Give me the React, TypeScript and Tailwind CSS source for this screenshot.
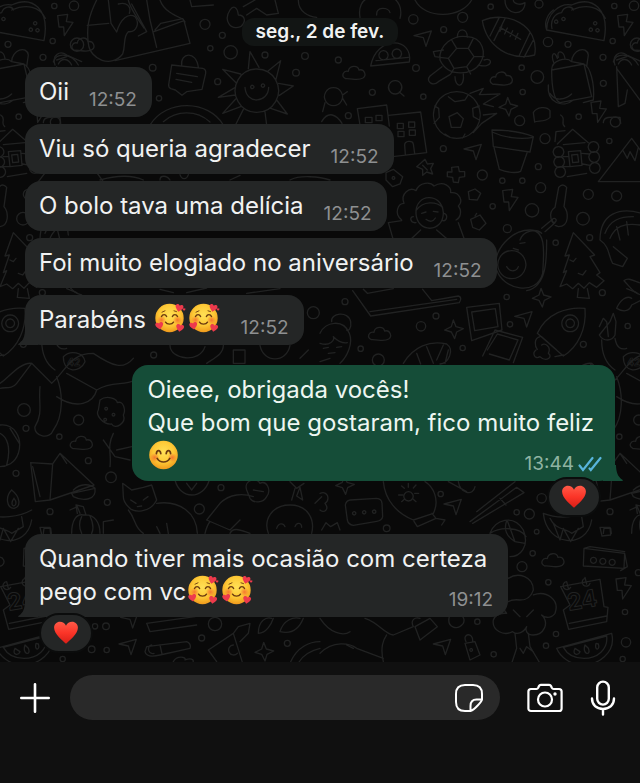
import type { ReactNode } from 'react';

type Dot = [number, number, number];
type Stamp = [number, number];

/* Wallpaper artwork is drawn on a 3x grid and repeated every 1680 units. */
const DOTS: Dot[] = [
  [458, 203, 10], [477, 295, 8], [653, 245, 9], [615, 73, 15], [667, 106, 9], [631, 145, 8], [692, 157, 20],
  [795, 165, 9], [915, 168, 10], [888, 218, 10], [1240, 58, 14], [1388, 52, 15], [1331, 89, 9], [1015, 180, 9],
  [1248, 204, 10], [1117, 277, 9], [1472, 20, 8], [1617, 12, 12], [1843, 18, 8], [1902, 17, 14], [1838, 123, 8],
  [1809, 172, 9], [1810, 250, 9], [1704, 133, 9], [1644, 126, 14], [1565, 203, 8], [1612, 231, 19], [1568, 276, 8],
  [1270, 290, 8], [1045, 347, 9], [1559, 362, 15], [1846, 366, 15], [1736, 350, 8], [1828, 423, 8], [1635, 416, 15],
  [1615, 500, 9], [1447, 525, 15], [1330, 446, 9], [1567, 542, 8], [1507, 542, 8], [1622, 563, 15], [1478, 619, 8],
  [1596, 631, 20], [1522, 686, 12], [1749, 656, 19], [1765, 583, 15], [1850, 588, 15], [231, 134, 20],
  [1667, 728, 8], [1769, 713, 9], [1807, 878, 9], [1520, 891, 8], [1035, 905, 9], [1308, 948, 9], [1263, 979, 14],
  [1530, 973, 8], [1388, 1044, 8], [1082, 1046, 8], [1750, 1033, 9], [1883, 978, 8], [1135, 1080, 18],
  [72, 1230, 19], [236, 1260, 15], [78, 1285, 9], [178, 1310, 8], [461, 1065, 9], [940, 938, 18],
  [265, 1382, 9], [333, 1432, 16], [48, 1420, 9], [322, 1507, 9], [150, 1535, 9], [663, 1463, 9], [598, 1527, 15],
  [318, 1879, 10], [285, 1879, 8], [645, 1872, 20], [605, 1914, 9], [862, 1930, 9], [275, 1948, 10], [320, 1950, 8],
  [188, 1977, 8], [1160, 1585, 10], [1322, 1482, 8], [1588, 1542, 15], [1550, 1537, 8], [1610, 1595, 7],
  [1598, 1660, 8], [1566, 1700, 15], [1645, 1747, 8], [1878, 1927, 14], [1875, 1836, 8],
  [1668, 1902, 8], [1638, 1937, 8], [1481, 1963, 8], [1432, 1865, 8], [1915, 1718, 9], [1625, 1495, 14],
];

const BOLTS: Stamp[] = [[1875, 75], [1795, 335], [1530, 600], [1870, 1765]];
const SPARKS: Stamp[] = [[1525, 320], [1625, 893], [1362, 988], [793, 1955], [1035, 1455]];
const CLOUDS: Stamp[] = [[1063, 220], [1505, 237], [1140, 1003], [245, 1330], [1660, 1682], [1930, 135]];
const PLANES: Stamp[] = [[1270, 115], [1420, 455], [1572, 957], [1360, 1520], [385, 1940], [1328, 1940], [390, 1860]];

const LINES: string[] = [
  // mitten and toy tower
  'M290 0C262 55 260 90 265 130C270 180 335 205 368 162C378 134 368 110 385 95C410 98 420 68 405 50C385 38 362 56 350 96L333 70L325 0M262 76L326 70M355 12C380 5 395 20 388 40',
  'M385 0C390 24 412 55 432 84M440 0L450 60L470 142M462 95L552 62L570 130L345 182M465 90L482 70L548 56L555 66M395 12L440 95L415 108M480 0C490 30 520 45 550 58',
  // notepad bag
  'M515 195L608 205Q619 208 617 220L606 268L560 275L546 286L526 270L512 266Q505 262 506 254ZM530 220L592 230M528 238L575 247M545 196C540 158 588 150 595 202',
  // sun
  'M770 207A65 65 0 1 0 771 207ZM735 262C738 315 805 310 806 262M752 262A5 5 0 1 1 753 264M784 258A5 5 0 1 1 785 260M745 206L750 155L777 202M805 212L842 182L828 238M836 250L880 258L838 286M830 300L862 342L812 325M795 336L800 375M730 328L708 372M722 320L668 340L707 297M706 285L655 292L706 262M708 248L668 208L722 222',
  'M450 375C500 295 625 300 670 375M490 365C530 330 590 330 630 366',
  // robot, star and face along the top edge
  'M690 30C670 60 690 92 722 80C740 66 735 45 715 45C712 20 700 15 690 30M730 20L765 0M740 45L770 25L800 45L835 40L825 0M895 0C895 35 925 50 950 52M570 0L575 20L640 15',
  'M1080 52C1075 25 1085 -5 1110 -5M1200 55C1208 25 1195 0 1175 -8M1245 0C1275 60 1385 55 1415 0M1130 45C1128 20 1165 20 1170 38M1515 0C1515 48 1575 50 1575 8C1560 18 1540 10 1540 0',
  // rice ball
  'M1112 198L1228 186C1240 110 1130 105 1112 198ZM1150 152A14 14 0 1 0 1151 152M1190 147A14 14 0 1 0 1191 147M1128 182L1225 172',
  // turtle
  'M1320 180C1315 135 1360 105 1400 110C1450 112 1460 160 1440 190C1420 225 1345 235 1320 180ZM1345 175L1370 145L1405 145L1422 170L1400 200L1362 205ZM1345 175L1320 172M1370 145L1355 120M1405 145L1420 115M1422 170L1452 170M1400 200L1412 222M1362 205L1352 222M1372 112C1372 82 1402 82 1402 112M1452 180C1480 170 1480 205 1438 196M1326 200L1290 228C1275 245 1300 260 1315 245L1350 224M1365 230C1365 265 1395 265 1390 222M1330 150L1300 155L1305 170L1322 172',
  // football
  'M1447 62C1520 30 1620 75 1604 165C1530 185 1460 140 1447 62ZM1470 108L1498 52M1482 122L1516 54M1557 168L1590 98M1572 172L1600 120M1500 82L1562 118M1506 76L1500 94M1522 84L1514 102M1538 92L1530 110M1554 100L1546 118',
  // taco
  'M1640 90C1640 40 1680 8 1715 15C1780 -15 1830 30 1812 122ZM1640 90C1632 70 1640 45 1660 30M1656 86C1650 60 1665 40 1685 38C1690 20 1715 15 1720 30M1668 60A5 5 0 1 0 1669 60M1690 52A5 5 0 1 0 1691 52M1785 65A5 5 0 1 0 1786 65M1772 84A5 5 0 1 0 1773 84M1792 86A5 5 0 1 0 1793 86M1715 30C1760 10 1800 20 1816 55',
  // magnifier, fish
  'M1185 242A20 20 0 1 0 1186 242M1198 276L1212 288M1000 263A27 27 0 1 0 1001 263M1028 285L1042 275M1028 295L1040 315M975 308L968 335',
  // backpack
  'M1655 210L1752 192L1775 290L1680 308C1660 300 1655 250 1655 210ZM1655 210C1655 180 1700 170 1715 185L1752 192C1770 200 1785 250 1780 300L1750 308M1662 190C1650 160 1665 150 1672 175M1675 172C1668 150 1690 150 1695 175M1715 185C1715 150 1760 135 1765 165L1760 200M1645 255C1640 310 1690 325 1720 300M1650 280C1665 305 1695 300 1715 282',
  // baseball bat
  'M1845 195C1835 165 1860 150 1880 165L1925 185M1850 200L1855 320M1850 205L1920 300M1855 320L1875 310L1882 270M1850 180L1880 170',
  // buildings
  'M1080 375L1072 326L1160 315L1168 378M1096 352H1116V368H1096ZM1128 346H1146V362H1128ZM1165 346L1262 336L1280 458L1178 470M1192 370H1210V386H1192ZM1226 366H1244V382H1226ZM1194 394H1212V410H1194ZM1228 390H1246V406H1228ZM1216 464L1214 435C1214 422 1238 420 1240 432L1244 460M965 365C985 330 1010 345 1026 370',
  // soccer ball with flames
  'M1370 275A70 70 0 1 0 1371 275M1347 350L1372 338L1390 356L1382 382L1354 382ZM1345 290L1365 305L1395 300L1405 284M1302 370L1318 352L1316 325L1304 318M1438 318L1418 325L1420 350L1438 360M1335 402L1350 412M1395 402L1388 414M1410 280L1450 265L1438 284L1500 282L1450 312L1480 320M1450 345L1490 340L1445 370L1420 398',
  // pot
  'M1476 390C1515 390 1565 395 1600 410L1590 456L1480 440ZM1476 396C1510 412 1560 420 1600 412M1482 442L1498 508C1520 518 1550 520 1562 514L1582 456',
  // blob and squiggle
  'M1600 338C1610 320 1640 318 1650 332L1650 352C1635 368 1612 360 1604 366ZM1682 345C1700 355 1680 370 1694 380',
  // log cabin
  'M1665 425L1668 395L1695 392M1672 432L1718 388L1765 428M1690 434L1755 428M1690 470L1705 470M1690 500L1712 500M1702 530L1760 520M1705 455L1742 452L1746 496L1710 500ZM1715 465L1733 463L1736 486L1718 488ZM1675 440A16 16 0 1 0 1676 440M1677 470A16 16 0 1 0 1678 470M1680 500A16 16 0 1 0 1681 500M1780 425A16 16 0 1 0 1781 425M1782 455A16 16 0 1 0 1783 455M1784 488A16 16 0 1 0 1785 488M1746 460L1768 462M1748 492L1770 496',
  // mountain
  'M1795 545L1895 415L1990 545ZM1868 450L1882 475L1890 455L1905 482L1915 442',
  // small flowers
  'M1262 490L1275 478L1282 492L1300 490L1292 506L1298 522L1280 516L1268 526L1268 508L1250 500ZM1268 496L1282 510M1355 502L1375 500L1378 515L1394 515L1394 530L1378 532L1375 548L1360 546L1358 532L1342 530L1342 516L1356 516Z',
  'M1158 518L1180 508L1208 530L1200 552L1178 560L1158 540ZM1180 530A4 4 0 1 0 1181 530M1405 575L1425 567L1442 580L1432 600L1408 598ZM1412 658L1440 645L1458 670L1438 690L1418 682ZM1425 648L1430 640',
  // curly-haired portrait
  'M1205 660C1180 640 1195 610 1212 610C1200 580 1230 560 1248 572C1258 545 1292 545 1302 558C1330 540 1355 560 1352 578C1380 575 1390 605 1375 618C1388 635 1380 655 1368 660M1248 640C1245 580 1325 575 1330 638C1330 700 1250 700 1248 640M1248 632C1270 600 1310 605 1328 622M1265 640L1278 636M1300 634L1314 636M1278 658C1290 668 1300 664 1306 654M1240 650C1228 650 1230 670 1248 668M1332 640C1346 645 1340 664 1328 662M1165 668L1180 720M1165 668L1205 662M1375 668L1392 715M1230 720L1262 690M1310 690L1345 720',
  // violin and avocado
  'M1665 622L1676 562Q1688 548 1700 562L1692 620M1665 622C1640 640 1655 675 1675 680C1710 680 1705 635 1692 620M1655 660L1625 685M1665 668L1635 695M1662 655A6 6 0 1 0 1663 655M1560 720C1570 690 1610 685 1625 700',
  'M1490 810C1475 750 1535 690 1590 690C1640 690 1632 760 1628 820C1610 890 1510 870 1490 810ZM1535 752A42 42 0 1 0 1536 752M1640 720C1640 780 1640 860 1580 872M1540 745L1555 750M1560 730L1575 728M1520 800C1530 818 1550 815 1555 800',
  // shell
  'M1800 720C1800 640 1860 620 1925 640M1815 700C1830 660 1860 650 1900 650M1830 715C1845 680 1870 668 1920 675M1800 720C1830 740 1825 770 1838 790L1868 800L1882 775L1840 740M1850 680L1860 720M1880 665L1885 705',
  // bird
  'M1872 842C1885 830 1905 845 1925 850M1872 842C1890 860 1900 880 1925 885M1850 925C1860 900 1880 885 1895 895M1850 925C1875 940 1890 930 1895 915L1925 900',
  // fir tree
  'M1720 698L1695 768L1708 765L1690 818L1700 812L1680 860L1700 852L1718 866L1735 850L1752 865L1768 848L1790 862L1812 842L1790 825L1800 818L1770 770L1784 765ZM1735 866L1732 892L1768 895L1762 866M1710 780L1720 785L1728 775M1735 820L1748 825L1758 812',
  // laptop
  'M1058 872L1112 948L1378 908Q1388 892 1375 888L1295 902L1268 868M1090 868L1102 880L1180 866M1110 935L1370 898',
  // framed pictures
  'M1400 922L1498 910L1506 990L1415 1022ZM1415 936L1486 926L1494 980L1424 992ZM1448 1068L1485 990L1568 1012L1540 1088M1462 1050L1492 1002L1554 1020L1528 1080L1468 1062',
  // bun portrait
  'M960 1000C975 965 1030 955 1048 1000C1060 1030 1042 1070 1020 1090M995 965C990 940 1045 930 1052 965C1055 985 1045 995 1040 990M960 1030C990 1040 1005 1020 1000 1010C1015 1025 1030 1030 1042 1028M970 1045L985 1042M1010 1042L1025 1040M985 1060L1005 1058M960 1085L990 1075',
  // croissant
  'M1210 1090C1240 1040 1290 1020 1340 1032C1365 1050 1345 1090 1320 1092M1280 1040L1300 1090M1250 1060L1262 1092M1330 1035L1310 1080M1345 1050L1335 1090',
  // rocket
  'M1612 1000C1640 940 1700 920 1755 925C1760 985 1735 1040 1690 1068ZM1710 945A25 25 0 1 0 1711 945M1710 957A13 13 0 1 0 1711 957M1625 1010L1670 1050M1620 1010C1600 1015 1605 1040 1612 1048M1690 1065L1665 1070M1608 1050C1595 1060 1605 1080 1620 1070C1640 1088 1660 1070 1645 1060C1655 1040 1635 1028 1625 1035',
  // stretching cat in a jersey
  'M118 980L130 955L140 965L145 1010M150 965L160 940L168 965L165 1005C155 1025 130 1025 118 1005ZM125 1020C125 1060 135 1090 165 1110M165 1015C170 1045 185 1050 200 1045',
  'M0 1165C15 1160 35 1170 50 1150L95 1090L155 1150M95 1090C60 1085 20 1140 0 1150M155 1150C200 1110 210 1060 280 1060C340 1100 370 1110 400 1075M120 1160C115 1210 130 1240 105 1280C100 1310 150 1320 160 1290C190 1250 190 1180 170 1130M170 1190C230 1230 280 1210 290 1170L200 1120M290 1170C340 1140 370 1160 405 1140M190 1070C210 1050 250 1055 255 1085C240 1120 190 1120 190 1070',
  // cookie
  'M300 1200C320 1185 350 1195 352 1208C370 1200 378 1230 370 1245C380 1270 345 1290 335 1272C310 1275 285 1245 295 1230ZM318 1222A4 4 0 1 0 319 1222M340 1240A4 4 0 1 0 341 1240M315 1255A4 4 0 1 0 316 1255',
  'M0 1275C40 1270 70 1310 55 1360C45 1390 20 1400 0 1400M0 1300C20 1310 35 1340 20 1395M30 1285L58 1330M340 1300C320 1340 335 1360 330 1400M310 1320L345 1370L390 1380M350 1350L395 1340M400 1375L440 1390',
  // pizza slice and party cone
  'M92 1388L158 1392L150 1500L106 1505ZM158 1392L180 1360L282 1455L150 1500M180 1360L200 1390M215 1480L285 1465C290 1500 250 1505 220 1490ZM220 1470C240 1450 270 1450 285 1465M98 1400L120 1490',
  // candle flame, pumpkin
  'M35 1470C15 1490 20 1525 42 1525C65 1520 60 1490 35 1470M42 1495C32 1508 36 1518 42 1518C50 1514 50 1505 42 1495M215 1600C215 1560 230 1540 250 1545C285 1540 300 1570 300 1600M210 1530L232 1520L240 1540M232 1540L228 1515L250 1520L258 1545M245 1550C235 1570 240 1590 245 1600M270 1548C280 1570 280 1590 275 1600M310 1600L310 1565L340 1560M130 1600L132 1585L152 1585L154 1600',
  // cat
  'M370 1490L368 1450L395 1470L430 1462L455 1455L470 1500C450 1540 400 1540 385 1520C375 1510 370 1500 370 1490ZM392 1500L408 1510M430 1500L444 1490M412 1520L425 1518M385 1530C410 1560 400 1580 430 1600M470 1510C540 1500 590 1540 592 1600M470 1580L480 1600M500 1570L505 1600M525 1440C540 1500 610 1500 628 1440M560 1450L575 1470L590 1450',
  // reader
  'M620 1560L660 1510C690 1480 730 1480 760 1490M620 1560L690 1590L720 1560M740 1470C730 1440 770 1430 780 1450C800 1440 815 1470 800 1490C790 1510 760 1510 750 1495ZM760 1470L790 1475M615 1600C620 1580 625 1570 630 1565M690 1600C700 1580 720 1590 750 1600',
  'M805 1600C790 1560 815 1515 870 1515C925 1515 945 1560 935 1600M830 1585C835 1568 850 1568 855 1580M885 1580C890 1565 905 1568 905 1582M870 1445L890 1465L912 1450M885 1465L875 1500M900 1462L908 1500L890 1488ZM945 1510L965 1490',
  // chat box
  'M1050 1500L1130 1495Q1145 1496 1146 1510L1148 1550Q1146 1562 1130 1564L1060 1576Q1045 1574 1042 1560L1036 1515Q1038 1502 1050 1500ZM1062 1535A5 5 0 1 0 1063 1535M1092 1532A5 5 0 1 0 1093 1532M1122 1530A5 5 0 1 0 1123 1530M960 1480C985 1470 990 1500 975 1510C990 1530 970 1540 960 1530M965 1590L978 1568L992 1580L1012 1568L1020 1590',
  // hot-air balloon
  'M1150 1445C1155 1500 1190 1540 1240 1560L1300 1540C1320 1500 1300 1460 1275 1445M1225 1475A14 14 0 1 0 1226 1475M1225 1450V1462M1196 1485H1208M1244 1480H1256M1205 1505L1213 1498M1248 1505L1240 1498M1205 1458L1213 1465M1248 1455L1240 1464M1242 1564L1252 1580L1308 1555L1296 1540M1308 1555L1335 1560L1325 1575',
  // chopsticks
  'M1410 1565L1550 1462L1572 1478L1418 1570M1430 1535L1545 1445M1500 1495L1518 1515M1375 1445C1380 1480 1420 1490 1425 1460M1345 1445L1400 1475',
  // ramen bowl
  'M1630 1540C1640 1640 1760 1650 1775 1560M1630 1540C1680 1560 1740 1550 1775 1530M1650 1555C1665 1590 1700 1585 1715 1600L1750 1580L1745 1550M1660 1570L1680 1620L1690 1585L1712 1625L1735 1585M1800 1582L1830 1582L1832 1605L1806 1608Z',
  // beach ball
  'M1470 1600C1485 1560 1540 1540 1570 1590C1590 1640 1560 1670 1530 1670M1470 1600C1500 1580 1560 1580 1578 1610M1520 1562C1510 1590 1520 1610 1545 1625L1575 1630M1522 1562L1545 1625',
  // remote
  'M1752 1645L1874 1660L1872 1705L1750 1698ZM1752 1645L1770 1640L1874 1655M1874 1660L1882 1700L1862 1712M1780 1672A9 9 0 1 0 1781 1672M1808 1675A9 9 0 1 0 1809 1675M1836 1678A9 9 0 1 0 1837 1678',
  // calendar
  'M1682 1760L1800 1738L1812 1820L1824 1822L1820 1865L1706 1888L1690 1830L1710 1815ZM1708 1870L1820 1848M1700 1745A12 12 0 1 0 1712 1762M1755 1735A12 12 0 1 0 1770 1750M1700 1745L1705 1765M1755 1732L1760 1752',
  // broccoli
  'M1525 1735C1555 1715 1600 1730 1600 1770C1590 1800 1570 1800 1560 1800M1600 1785C1640 1770 1680 1800 1665 1840C1650 1860 1630 1850 1625 1845C1650 1870 1630 1905 1600 1905C1580 1905 1575 1890 1580 1880C1570 1900 1550 1905 1538 1895C1510 1910 1475 1890 1480 1860C1490 1835 1515 1840 1520 1840C1500 1820 1520 1795 1560 1800M1545 1900L1550 1945L1535 1990M1585 1900L1590 1940L1620 1990M1560 1945L1570 1960L1580 1940L1600 1955M1540 1830L1560 1850M1600 1830L1580 1850',
  // watermelon
  'M1670 1945L1835 1900C1850 1960 1790 1995 1750 1995C1710 1995 1680 1970 1670 1945ZM1690 1942L1820 1908C1825 1950 1790 1975 1752 1975C1720 1975 1700 1960 1690 1942M1725 1945C1715 1965 1735 1968 1740 1955ZM1755 1935C1745 1965 1775 1968 1765 1945ZM1788 1930C1782 1955 1802 1950 1795 1932Z',
  // tag, runner
  'M1395 1930L1425 1925L1440 1965L1410 1980ZM1398 1925C1385 1900 1420 1895 1418 1924M1413 1946A4 4 0 1 0 1414 1946M960 1855C990 1900 1030 1910 1050 1895M1095 1855C1140 1870 1150 1900 1180 1905L1240 1880C1230 1860 1245 1850 1260 1855M1245 1880L1290 1855L1312 1880L1260 1920ZM1150 1985C1140 1940 1150 1920 1160 1905M960 1960C1000 1920 1050 1930 1070 1945L1150 1975M1040 1935L1060 1945M1348 1850C1340 1880 1370 1895 1390 1870C1395 1860 1390 1850 1385 1848',
  // crayons
  'M440 1940L560 1925Q575 1932 570 1945L480 1965Q440 1975 435 1955ZM455 1935A10 10 0 1 0 462 1960M480 1935L486 1962M440 1870L585 1850M440 1870L450 1895L590 1875M520 1985C530 1965 560 1970 555 1980C580 1970 585 1985 575 1990',
  'M625 1950L700 1900L728 1990M625 1950L650 1985M700 1900L715 1880L750 1870L745 1900L720 1925M700 1935A15 15 0 1 0 712 1960M775 1900C775 1860 800 1850 815 1855M775 1900C800 1900 815 1870 820 1855M840 1895C850 1860 880 1850 900 1855M840 1895C880 1905 900 1880 910 1855M870 1990C890 1940 930 1925 960 1925M895 1990C910 1960 940 1950 960 1945',
  // tops and bottoms of smaller objects
  'M300 540C350 525 400 525 430 540M480 540C480 525 500 525 510 540M540 524C545 540 560 540 565 524M690 540L720 526M870 540C900 524 960 530 990 540M130 368C130 350 150 350 180 352L182 370M480 868L520 878M560 878L620 864M740 880L840 866M200 866L230 878M160 186C170 155 215 160 235 195M175 192C185 172 205 175 215 195',
  'M510 1036C510 1080 600 1090 615 1040M620 1090C650 1070 670 1060 670 1036M700 1050H735V1090H700ZM780 1036C790 1090 860 1090 870 1036M900 1075L925 1050',
];

function Wallpaper() {
  return (
    <svg aria-hidden="true" className="pointer-events-none absolute inset-0 h-full w-full text-[#212222]">
      <defs>
        <g id="doodles" fill="none" stroke="currentColor" strokeWidth="4" strokeLinecap="round" strokeLinejoin="round">
          {DOTS.map(([x, y, r]) => (
            <circle key={`${x}-${y}`} cx={x} cy={y} r={r} />
          ))}
          {LINES.map((d) => (
            <path key={d} d={d} />
          ))}
          {BOLTS.map(([x, y]) => (
            <path key={`${x}-${y}`} transform={`translate(${x} ${y})`} d="M-22-28L8-32L4-10L24-8L-2 32L-4 6L-18 6Z" />
          ))}
          {SPARKS.map(([x, y]) => (
            <path key={`${x}-${y}`} transform={`translate(${x} ${y})`} d="M-2-28L6-8L28-2L8 8L2 28L-8 8L-28 2L-8-8Z" />
          ))}
          {CLOUDS.map(([x, y]) => (
            <path key={`${x}-${y}`} transform={`translate(${x} ${y})`} d="M-26 16C-42 8-32-10-18-6C-16-24 10-26 14-10C30-14 38 6 26 14C10 24-8 14-26 16Z" />
          ))}
          {PLANES.map(([x, y]) => (
            <path key={`${x}-${y}`} transform={`translate(${x} ${y})`} d="M-28-8L24-22L8 24L0-2Z" />
          ))}
          <text x="1706" y="1832" transform="rotate(-10 1706 1832)" fontSize="70" fontWeight="700" strokeWidth="3" className="font-['Inter',sans-serif]">
            24
          </text>
          <text x="202" y="1098" fontSize="30" fontWeight="700" strokeWidth="2" className="font-['Inter',sans-serif]">
            42
          </text>
        </g>
      </defs>
      <g transform="scale(0.33333)">
        <use href="#doodles" x="-1680" />
        <use href="#doodles" />
        <use href="#doodles" x="1680" />
        <use href="#doodles" x="3360" />
      </g>
    </svg>
  );
}

const HEART = 'M12 22C9 19 1 13 1 7.2C1 3.8 3.5 1.6 6.4 1.6C8.8 1.6 11 3 12 5.2C13 3 15.2 1.6 17.6 1.6C20.5 1.6 23 3.8 23 7.2C23 13 15 19 12 22Z';

function EmojiDefs() {
  return (
    <svg aria-hidden="true" className="absolute h-0 w-0">
      <defs>
        <radialGradient id="face" cx="0.5" cy="0.4" r="0.6">
          <stop offset="0" stopColor="#ffe056" />
          <stop offset="0.6" stopColor="#fdc936" />
          <stop offset="1" stopColor="#f09a1c" />
        </radialGradient>
        <radialGradient id="blush">
          <stop offset="0" stopColor="#f4622c" stopOpacity="0.8" />
          <stop offset="1" stopColor="#f4622c" stopOpacity="0" />
        </radialGradient>
        <linearGradient id="heart" x1="0" y1="0" x2="0" y2="1">
          <stop offset="0" stopColor="#ff5a48" />
          <stop offset="0.5" stopColor="#fb3528" />
          <stop offset="1" stopColor="#d81f18" />
        </linearGradient>
      </defs>
    </svg>
  );
}

function LoveFace() {
  return (
    <svg role="img" aria-label="🥰" viewBox="0 0 32 32" className="mx-px inline-block h-8 w-8 align-[-7px]">
      <circle cx="15.5" cy="15" r="14.2" fill="url(#face)" />
      <circle cx="7.5" cy="17" r="4.5" fill="url(#blush)" />
      <circle cx="23.5" cy="17" r="4.5" fill="url(#blush)" />
      <g fill="none" stroke="#6b3a10" strokeWidth="1.4" strokeLinecap="round">
        <path d="M7.5 13.6C8.6 11 11.6 11 12.6 13.6M18.4 13.6C19.4 11 22.4 11 23.5 13.6" />
        <path d="M11.5 19.2C13 21.8 18 21.8 19.5 19.2" />
        <path d="M8 9.2L11 7.8M20 7.8L22.5 8.6" strokeWidth="0.9" />
      </g>
      <g fill="#ee3a4c">
        <path d={HEART} transform="translate(22 0) rotate(14) scale(0.36)" />
        <path d={HEART} transform="translate(0.5 19.5) rotate(-10) scale(0.36)" />
        <path d={HEART} transform="translate(22.5 20) rotate(12) scale(0.36)" />
        <path d={HEART} transform="translate(28.5 5) scale(0.13)" />
      </g>
    </svg>
  );
}

function SmileFace() {
  return (
    <svg role="img" aria-label="😊" viewBox="0 0 32 32" className="mx-px h-8 w-8">
      <circle cx="15.5" cy="15" r="14.3" fill="url(#face)" />
      <circle cx="6.8" cy="17.5" r="4.6" fill="url(#blush)" />
      <circle cx="24.2" cy="17.5" r="4.6" fill="url(#blush)" />
      <g fill="none" stroke="#6b3a10" strokeWidth="1.7" strokeLinecap="round">
        <path d="M8.4 13.6C8.8 9.6 12.2 9.6 12.8 13.6M18.2 13.6C18.8 9.6 22.2 9.6 22.6 13.6" />
        <path d="M9.2 18.4C12 23.2 19 23.2 21.8 18.4" />
      </g>
    </svg>
  );
}

function Reaction({ side }: { side: string }) {
  return (
    <button
      type="button"
      aria-label="Reação: coração"
      className={`absolute -bottom-9 flex h-10 w-[54px] items-center justify-center rounded-full border-2 border-[#0b0c0c] bg-[#242626] ${side}`}
    >
      <svg viewBox="0 0 24 24" className="h-[26px] w-[26px]">
        <path d={HEART} fill="url(#heart)" />
      </svg>
    </button>
  );
}

function Tail({ className }: { className: string }) {
  return (
    <svg aria-hidden="true" viewBox="0 0 20 16" className={`absolute bottom-0 h-4 w-5 ${className}`}>
      <path d="M20 16H1C-0.5 16 0 15 1 14.4C5 12 7 7 7 0H20Z" fill="currentColor" />
    </svg>
  );
}

type ReceivedProps = { time: string; tail?: boolean; reaction?: boolean; lead?: string; children: ReactNode };

function Received({ time, tail, reaction, lead, children }: ReceivedProps) {
  return (
    <li className="relative w-fit rounded-2xl bg-[#242626] pt-2 pr-[15px] pb-[9px] pl-[14px] text-[#f1f2f2]">
      {tail && <Tail className="-left-[7px] text-[#242626]" />}
      {lead && <p className="pr-[6px]">{lead}</p>}
      <div className="flex items-end justify-between gap-5">
        <p>{children}</p>
        <time className="text-[19px] leading-4 text-[#8e9091]">{time}</time>
      </div>
      {reaction && <Reaction side="left-[14px]" />}
    </li>
  );
}

const iconButton = 'flex shrink-0 items-center justify-center text-white';

export default function App() {
  return (
    <div className="flex min-h-screen flex-col bg-[#101010] font-['Inter','Liberation_Sans',sans-serif]">
      <EmojiDefs />
      <main className="relative grow overflow-hidden bg-[#090909] px-[25px] pt-[18px] pb-[45px]">
        <Wallpaper />
        <h1 className="relative mx-auto w-fit rounded-xl bg-[#121514] px-[14px] text-[19px] leading-7 font-semibold text-[#f1f2f2]">
          seg., 2 de fev.
        </h1>
        <ol className="relative mt-[21px] flex flex-col gap-[7px] text-2xl leading-[33px]">
          <Received time="12:52">Oii</Received>
          <Received time="12:52">Viu só queria agradecer</Received>
          <Received time="12:52">O bolo tava uma delícia</Received>
          <Received time="12:52">Foi muito elogiado no aniversário</Received>
          <Received time="12:52" tail>
            Parabéns <LoveFace />
            <LoveFace />
          </Received>
          <li className="relative mt-[13px] mb-[46px] ml-auto w-fit rounded-2xl bg-[#154d38] pt-2 pr-[13px] pb-[9px] pl-[15px] text-[#edf6f1]">
            <Tail className="-right-2 -scale-x-100 text-[#154d38]" />
            <p className="pr-2">
              Oieee, obrigada vocês!
              <br />
              Que bom que gostaram, fico muito feliz
            </p>
            <div className="flex h-[33px] items-end justify-between">
              <SmileFace />
              <span className="flex items-center gap-1">
                <time className="text-[19px] leading-4 text-[#8fb3a2]">13:44</time>
                <svg role="img" aria-label="Lida" viewBox="0 0 24 16" className="h-4 w-6" fill="none" stroke="#58b4dc" strokeWidth="2.2" strokeLinecap="round">
                  <path d="M1.5 9.5L5 14L14.5 2M11.5 12.5L12.8 14L22.5 2" />
                </svg>
              </span>
            </div>
            <Reaction side="right-[14px]" />
          </li>
          <Received time="19:12" tail reaction lead="Quando tiver mais ocasião com certeza">
            pego com vc
            <LoveFace />
            <LoveFace />
          </Received>
        </ol>
      </main>
      <form className="flex items-center pt-[13px] pr-6 pb-[63px] pl-5" onSubmit={(e) => e.preventDefault()}>
        <button type="button" aria-label="Anexar" className={iconButton}>
          <svg viewBox="0 0 30 30" className="h-[30px] w-[30px]" fill="none" stroke="currentColor" strokeWidth="2.6" strokeLinecap="round">
            <path d="M15 1.3V28.7M1.3 15H28.7" />
          </svg>
        </button>
        <div className="ml-5 flex h-[45px] min-w-0 grow items-center rounded-full bg-[#292929] pr-[17px] pl-5">
          <input aria-label="Mensagem" className="min-w-0 grow bg-transparent text-2xl text-white outline-none" />
          <button type="button" aria-label="Figurinhas" className={iconButton}>
            <svg viewBox="0 0 28 28" className="h-7 w-7" fill="none" stroke="currentColor" strokeWidth="2" strokeLinejoin="round">
              <path d="M15.5 27H10C4 27 1 24 1 18V10C1 4 4 1 10 1H18C24 1 27 4 27 10V15.5C27 17 20 25.5 15.5 27ZM15.5 27V22C15.5 17.5 17.5 15.5 21.5 15.5H27" />
            </svg>
          </button>
        </div>
        <button type="button" aria-label="Câmera" className={`ml-[27px] ${iconButton}`}>
          <svg viewBox="0 0 36 30" className="h-[30px] w-9" fill="none" stroke="currentColor" strokeWidth="2.2" strokeLinejoin="round">
            <path d="M4 6H9.5C10.4 6 10.8 5.6 11.2 4.8L12 3C12.4 2.1 13 1.8 13.8 1.8H22.2C23 1.8 23.6 2.1 24 3L24.8 4.8C25.2 5.6 25.6 6 26.5 6H32C33.6 6 34.6 7 34.6 8.6V25.4C34.6 27 33.6 28 32 28H4C2.4 28 1.4 27 1.4 25.4V8.6C1.4 7 2.4 6 4 6Z" />
            <circle cx="18" cy="16.5" r="7" />
            <circle cx="28" cy="11" r="1.7" fill="currentColor" stroke="none" />
          </svg>
        </button>
        <button type="button" aria-label="Gravar áudio" className={`ml-[27px] ${iconButton}`}>
          <svg viewBox="0 0 26 36" className="h-9 w-[26px]" fill="none" stroke="currentColor" strokeWidth="2.4" strokeLinecap="round">
            <rect x="7.2" y="1.6" width="11.6" height="23" rx="5.8" />
            <path d="M2 18.5C2 25 6.5 29 13 29C19.5 29 24 25 24 18.5M13 29V34.5" />
          </svg>
        </button>
      </form>
    </div>
  );
}
